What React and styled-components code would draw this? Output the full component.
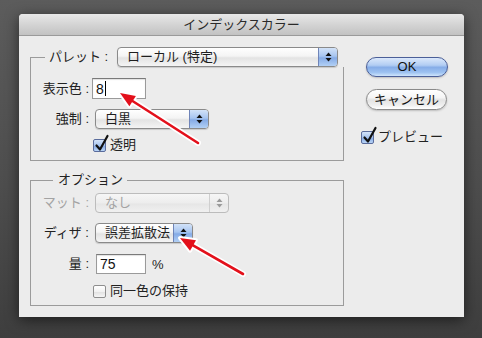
import React from "react";
import styled, { createGlobalStyle } from "styled-components";

const Global = createGlobalStyle`
  html, body { margin: 0; padding: 0; }
  body { font-family: "Liberation Sans", "Noto Sans CJK JP", sans-serif; }
  * { box-sizing: border-box; }
`;

const Screen = styled.div`
  position: relative;
  width: 482px;
  height: 338px;
  overflow: hidden;
  padding: 14px 0 0 19px;
  background: linear-gradient(180deg, #5c5c5c 0%, #4d4d4d 55%, #3e3e3e 100%);
`;

const Dialog = styled.div`
  width: 445px;
  height: 303px;
  background: #ececec;
  box-shadow: 0 3px 14px rgba(0, 0, 0, 0.55);
  display: flex;
  flex-direction: column;
  border-radius: 4px 4px 0 0;
`;

const TitleBar = styled.div`
  flex: none;
  height: 22px;
  background: linear-gradient(180deg, #e8e8e8 0%, #d4d4d4 50%, #c2c2c2 100%);
  border-bottom: 1px solid #9a9a9a;
  border-radius: 4px 4px 0 0;
  display: flex;
  align-items: center;
  justify-content: center;
  font-size: 13px;
  line-height: 16px;
  color: #2a2a2a;
`;

const Body = styled.div`
  flex: 1;
  display: flex;
  padding: 11px 0 0 11px;
`;

const LeftCol = styled.div`
  width: 314px;
  display: flex;
  flex-direction: column;
  gap: 11px;
`;

const Group = styled.fieldset`
  margin: 0;
  padding: ${(p) => p.$pad};
  border: 1px solid #9b9b9b;
  min-width: 0;
  display: flex;
  flex-direction: column;
`;

const Legend = styled.legend`
  margin-left: ${(p) => p.$offset}px;
  padding: ${(p) => p.$pad};
  display: flex;
  align-items: center;
  font-size: 13px;
  line-height: 16px;
  color: #222;
`;

const LegendLabel = styled.span`
  width: ${(p) => p.$w}px;
  flex: none;
  white-space: nowrap;
`;

const Row = styled.div`
  display: flex;
  align-items: center;
  height: ${(p) => p.$h}px;
  margin-top: ${(p) => p.$top}px;
  padding-left: ${(p) => p.$indent}px;
`;

const Label = styled.span`
  width: 49px;
  flex: none;
  text-align: right;
  font-size: 13px;
  line-height: 16px;
  white-space: nowrap;
  color: ${(p) => (p.$disabled ? "#a3a3a3" : "#222")};
  margin-right: ${(p) => p.$gap}px;
`;

const PopupBox = styled.div`
  width: ${(p) => p.$w}px;
  height: 20px;
  flex: none;
  display: flex;
  border: 1px solid ${(p) => (p.$disabled ? "#bcbcbc" : "#8a8a8a")};
  border-radius: 4px;
  overflow: hidden;
  background: ${(p) =>
    p.$disabled
      ? "linear-gradient(180deg, #f6f6f6 0%, #ededed 50%, #e6e6e6 55%, #f0f0f0 100%)"
      : "linear-gradient(180deg, #ffffff 0%, #f4f4f4 45%, #e3e3e3 55%, #f4f4f4 100%)"};
  box-shadow: ${(p) => (p.$disabled ? "none" : "0 1px 1px rgba(0,0,0,0.15)")};
`;

const PopupText = styled.span`
  flex: 1;
  padding-left: 9px;
  font-size: 13px;
  line-height: 18px;
  color: ${(p) => (p.$disabled ? "#a3a3a3" : "#1e1e1e")};
  white-space: nowrap;
`;

const Stepper = styled.span`
  width: 19px;
  flex: none;
  display: flex;
  align-items: center;
  justify-content: center;
  border-left: 1px solid ${(p) => (p.$disabled ? "#cfcfcf" : "#6f84b8")};
  background: ${(p) =>
    p.$disabled
      ? "transparent"
      : "linear-gradient(180deg, #d2e2f8 0%, #a7c5f0 45%, #85abe6 55%, #b2d0f5 100%)"};
`;

const TextField = styled.div`
  width: ${(p) => p.$w}px;
  height: ${(p) => p.$h}px;
  flex: none;
  display: flex;
  align-items: center;
  padding-left: 3px;
  background: #fff;
  border: 1px solid #9a9a9a;
  border-top-color: #7a7a7a;
  box-shadow: inset 0 1px 1px rgba(0, 0, 0, 0.12);
  font-size: 14px;
  line-height: 16px;
  color: #111;
`;

const Caret = styled.span`
  display: inline-block;
  width: 1px;
  height: 15px;
  margin-left: 1px;
  background: #000;
`;

const Unit = styled.span`
  margin-left: 6px;
  font-size: 13px;
  color: #222;
`;

const CheckBox = styled.span`
  position: relative;
  width: 13px;
  height: 13px;
  flex: none;
  border-radius: 2px;
  border: 1px solid ${(p) => (p.$checked ? "#5a6c9c" : "#8e8e8e")};
  background: ${(p) =>
    p.$checked
      ? "linear-gradient(180deg, #d3e3f9 0%, #a6c4ef 50%, #86abe5 55%, #b9d4f6 100%)"
      : "linear-gradient(180deg, #ffffff 0%, #f2f2f2 50%, #e2e2e2 55%, #f6f6f6 100%)"};
`;

const CheckMark = styled.svg`
  position: absolute;
  left: 0;
  top: -5px;
  overflow: visible;
`;

const CheckText = styled.span`
  margin-left: 4px;
  font-size: 13px;
  line-height: 16px;
  color: #222;
`;

const RightCol = styled.div`
  margin-left: 17px;
  padding-top: 10px;
  display: flex;
  flex-direction: column;
`;

const PillButton = styled.button`
  margin: ${(p) => p.$top}px 0 0 5px;
  width: ${(p) => p.$w}px;
  height: ${(p) => p.$h}px;
  padding: 0;
  border-radius: 11px;
  font-family: inherit;
  font-size: 13px;
  line-height: 16px;
  color: #111;
  border: 1px solid ${(p) => (p.$primary ? "#4b5f98" : "#8a8a8a")};
  background: ${(p) =>
    p.$primary
      ? "linear-gradient(180deg, #dbe8fb 0%, #b2cdf3 40%, #86ade8 52%, #9dc2f1 80%, #cfe5fc 100%)"
      : "linear-gradient(180deg, #ffffff 0%, #f5f5f5 40%, #e3e3e3 52%, #efefef 80%, #ffffff 100%)"};
  box-shadow: 0 1px 2px rgba(0, 0, 0, 0.2);
`;

const PreviewRow = styled.div`
  display: flex;
  align-items: center;
  margin-top: 19px;
`;

const Overlay = styled.svg`
  position: absolute;
  left: 0;
  top: 0;
  pointer-events: none;
`;

function StepArrows({ disabled }) {
  const c = disabled ? "#9a9a9a" : "#111";
  return (
    <svg width="7" height="12" viewBox="0 0 7 12">
      <polygon points="3.5,1.5 6.5,5 0.5,5" fill={c} />
      <polygon points="0.5,7 6.5,7 3.5,10.5" fill={c} />
    </svg>
  );
}

function Popup({ w, text, disabled }) {
  return (
    <PopupBox $w={w} $disabled={disabled}>
      <PopupText $disabled={disabled}>{text}</PopupText>
      <Stepper $disabled={disabled}>
        <StepArrows disabled={disabled} />
      </Stepper>
    </PopupBox>
  );
}

function Check({ checked, children }) {
  return (
    <>
      <CheckBox $checked={checked}>
        {checked && (
          <CheckMark width="16" height="18" viewBox="0 0 16 18">
            <path d="M2.5 10.5 L6 14.5 L13.5 1" fill="none" stroke="#111" strokeWidth="2.2" strokeLinecap="round" strokeLinejoin="round" />
          </CheckMark>
        )}
      </CheckBox>
      <CheckText>{children}</CheckText>
    </>
  );
}

function RedArrow({ tip, tail }) {
  const [tx, ty] = tip;
  const [sx, sy] = tail;
  const dx = tx - sx;
  const dy = ty - sy;
  const len = Math.hypot(dx, dy);
  const ux = dx / len;
  const uy = dy / len;
  const hl = 15;
  const hw = 6;
  const bx = tx - ux * hl;
  const by = ty - uy * hl;
  const nx = -uy;
  const ny = ux;
  const pts = `${tx},${ty} ${bx + nx * hw},${by + ny * hw} ${bx - nx * hw},${by - ny * hw}`;
  return (
    <g>
      <line x1={sx} y1={sy} x2={bx} y2={by} stroke="#fff" strokeWidth="6" strokeLinecap="round" />
      <polygon points={pts} fill="#fff" stroke="#fff" strokeWidth="4" strokeLinejoin="round" />
      <line x1={sx} y1={sy} x2={bx + ux * 2} y2={by + uy * 2} stroke="#e3101b" strokeWidth="2.6" strokeLinecap="round" />
      <polygon points={pts} fill="#e3101b" />
    </g>
  );
}

export default function App() {
  return (
    <>
      <Global />
      <Screen>
        <Dialog>
          <TitleBar>インデックスカラー</TitleBar>
          <Body>
            <LeftCol>
              <Group $pad="0 0 8px 9px">
                <Legend $offset={5} $pad="0 7px 0 4px">
                  <LegendLabel $w={68}>パレット :</LegendLabel>
                  <Popup w={221} text="ローカル (特定)" />
                </Legend>
                <Row $h={21} $top={11} $indent={0}>
                  <Label $gap={3}>表示色 :</Label>
                  <TextField $w={54} $h={21}>
                    8<Caret />
                  </TextField>
                </Row>
                <Row $h={20} $top={10} $indent={0}>
                  <Label $gap={6}>強制 :</Label>
                  <Popup w={114} text="白黒" />
                </Row>
                <Row $h={14} $top={9} $indent={53}>
                  <Check checked>透明</Check>
                </Row>
              </Group>
              <Group $pad="0 0 7px 9px">
                <Legend $offset={13} $pad="0 4px 0 5px">
                  オプション
                </Legend>
                <Row $h={20} $top={5} $indent={0}>
                  <Label $gap={6} $disabled>
                    マット :
                  </Label>
                  <Popup w={134} text="なし" disabled />
                </Row>
                <Row $h={20} $top={10} $indent={0}>
                  <Label $gap={6}>ディザ :</Label>
                  <Popup w={98} text="誤差拡散法" />
                </Row>
                <Row $h={20} $top={11} $indent={0}>
                  <Label $gap={7}>量 :</Label>
                  <TextField $w={50} $h={20}>75</TextField>
                  <Unit>%</Unit>
                </Row>
                <Row $h={14} $top={10} $indent={53}>
                  <Check>同一色の保持</Check>
                </Row>
              </Group>
            </LeftCol>
            <RightCol>
              <PillButton $primary $w={82} $h={20} $top={0}>
                OK
              </PillButton>
              <PillButton $w={81} $h={21} $top={12}>
                キャンセル
              </PillButton>
              <PreviewRow>
                <Check checked>プレビュー</Check>
              </PreviewRow>
            </RightCol>
          </Body>
        </Dialog>
        <Overlay width="482" height="338" viewBox="0 0 482 338">
          <RedArrow tip={[120, 93]} tail={[198, 143]} />
          <RedArrow tip={[180, 238]} tail={[243, 274]} />
        </Overlay>
      </Screen>
    </>
  );
}
